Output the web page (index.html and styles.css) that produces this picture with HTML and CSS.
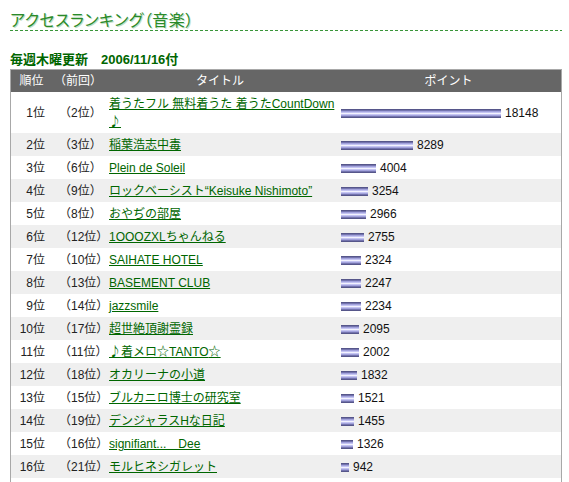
FILE: index.html
```html
<!DOCTYPE html>
<html lang="ja">
<head>
<meta charset="utf-8">
<title>アクセスランキング（音楽）</title>
<link rel="stylesheet" href="styles.css">
</head>
<body>
<div class="page">
  <h1 class="title">アクセスランキング（音楽）</h1>
  <p class="updated">毎週木曜更新　2006/11/16付</p>
  <div class="rank-box">
    <table class="rank">
      <colgroup>
        <col class="c-rank"><col class="c-prev"><col class="c-title"><col class="c-point">
      </colgroup>
      <thead>
        <tr><th>順位</th><th>（前回）</th><th>タイトル</th><th>ポイント</th></tr>
      </thead>
      <tbody>
        <tr><td class="rk">1位</td><td class="prev">（2位）</td><td class="ttl"><a href="#"><span class="nw">着うたフル 無料着うた 着うたCountDown</span> <span class="sym">♪</span></a></td><td class="pt"><span class="bar" style="width:160px"></span>18148</td></tr>
        <tr><td class="rk">2位</td><td class="prev">（3位）</td><td class="ttl"><a href="#">稲葉浩志中毒</a></td><td class="pt"><span class="bar" style="width:72px"></span>8289</td></tr>
        <tr><td class="rk">3位</td><td class="prev">（6位）</td><td class="ttl"><a href="#">Plein de Soleil</a></td><td class="pt"><span class="bar" style="width:35px"></span>4004</td></tr>
        <tr><td class="rk">4位</td><td class="prev">（9位）</td><td class="ttl"><a href="#">ロックベーシスト“Keisuke Nishimoto”</a></td><td class="pt"><span class="bar" style="width:27px"></span>3254</td></tr>
        <tr><td class="rk">5位</td><td class="prev">（8位）</td><td class="ttl"><a href="#">おやぢの部屋</a></td><td class="pt"><span class="bar" style="width:25px"></span>2966</td></tr>
        <tr><td class="rk">6位</td><td class="prev">（12位）</td><td class="ttl"><a href="#">1OOOZXLちゃんねる</a></td><td class="pt"><span class="bar" style="width:23px"></span>2755</td></tr>
        <tr><td class="rk">7位</td><td class="prev">（10位）</td><td class="ttl"><a href="#">SAIHATE HOTEL</a></td><td class="pt"><span class="bar" style="width:20px"></span>2324</td></tr>
        <tr><td class="rk">8位</td><td class="prev">（13位）</td><td class="ttl"><a href="#">BASEMENT CLUB</a></td><td class="pt"><span class="bar" style="width:20px"></span>2247</td></tr>
        <tr><td class="rk">9位</td><td class="prev">（14位）</td><td class="ttl"><a href="#">jazzsmile</a></td><td class="pt"><span class="bar" style="width:20px"></span>2234</td></tr>
        <tr><td class="rk">10位</td><td class="prev">（17位）</td><td class="ttl"><a href="#">超世絶頂謝霊録</a></td><td class="pt"><span class="bar" style="width:18px"></span>2095</td></tr>
        <tr><td class="rk">11位</td><td class="prev">（11位）</td><td class="ttl"><a href="#"><span class="sym">♪</span>着メロ<span class="sym">☆</span>TANTO<span class="sym">☆</span></a></td><td class="pt"><span class="bar" style="width:18px"></span>2002</td></tr>
        <tr><td class="rk">12位</td><td class="prev">（18位）</td><td class="ttl"><a href="#">オカリーナの小道</a></td><td class="pt"><span class="bar" style="width:16px"></span>1832</td></tr>
        <tr><td class="rk">13位</td><td class="prev">（15位）</td><td class="ttl"><a href="#">ブルカニロ博士の研究室</a></td><td class="pt"><span class="bar" style="width:13px"></span>1521</td></tr>
        <tr><td class="rk">14位</td><td class="prev">（19位）</td><td class="ttl"><a href="#">デンジャラスHな日記</a></td><td class="pt"><span class="bar" style="width:13px"></span>1455</td></tr>
        <tr><td class="rk">15位</td><td class="prev">（16位）</td><td class="ttl"><a href="#">signifiant...　Dee</a></td><td class="pt"><span class="bar" style="width:12px"></span>1326</td></tr>
        <tr><td class="rk">16位</td><td class="prev">（21位）</td><td class="ttl"><a href="#">モルヒネシガレット</a></td><td class="pt"><span class="bar" style="width:8px"></span>942</td></tr>
      </tbody>
    </table>
  </div>
</div>
</body>
</html>
```
FILE: styles.css
```css
body {
  margin: 0;
  background: #fff;
  font-family: "Liberation Sans", "Noto Sans CJK JP", sans-serif;
  font-size: 12px;
  color: #222;
}
.page {
  width: 552px;
  padding: 8px 0 0 10px;
}
.title {
  margin: 0;
  font-family: "Noto Sans CJK JP", sans-serif;
  font-feature-settings: "palt";
  font-size: 16px;
  font-weight: normal;
  line-height: 22px;
  letter-spacing: 0.5px;
  color: #2a8a2a;
  text-shadow: 1px 1px 0 #c4e0c4;
  padding-bottom: 1px;
  background: linear-gradient(to right, #3a963a 0 3px, transparent 3px) left bottom / 5px 1px repeat-x;
}
.updated {
  margin: 21px 0 0;
  font-size: 13px;
  font-weight: bold;
  line-height: 16px;
  color: #006600;
}
.rank-box {
  border: 1px solid #a8a8a8;
  border-bottom: none;
  padding-bottom: 40px;
  margin-top: 1px;
}
.rank {
  width: 550px;
  border-collapse: collapse;
  table-layout: fixed;
}
.c-rank { width: 41px; }
.c-prev { width: 52px; }
.c-title { width: 232px; }
.c-point { width: 225px; }
.rank th {
  background: #666;
  color: #fff;
  font-weight: normal;
  height: 22px;
  line-height: 22px;
  padding: 0;
  text-align: center;
}
.rank td {
  padding: 3px 0 2px;
  line-height: 18px;
  height: 18px;
  vertical-align: middle;
}
.rank tbody tr:nth-child(even) {
  background: #efefef;
}
.rk {
  text-align: right;
  padding-right: 7px !important;
}
.prev {
  padding-left: 7px !important;
  white-space: nowrap;
}
.ttl {
  padding-left: 5px !important;
}
.ttl a {
  color: #006600;
  text-decoration: underline;
}
.nw {
  white-space: nowrap;
}
.sym {
  font-family: "Noto Sans CJK JP", sans-serif;
  line-height: 12px;
}
.pt {
  padding-left: 5px !important;
  white-space: nowrap;
  color: #111;
}
.bar {
  display: inline-block;
  height: 9px;
  margin-right: 4px;
  vertical-align: -1px;
  background: linear-gradient(#56568a 0, #56568a 11%, #9090d0 22%, #c8c8f4 40%, #f2f2ff 50%, #c8c8f4 60%, #9090d0 78%, #56568a 89%, #56568a 100%);
}
```
